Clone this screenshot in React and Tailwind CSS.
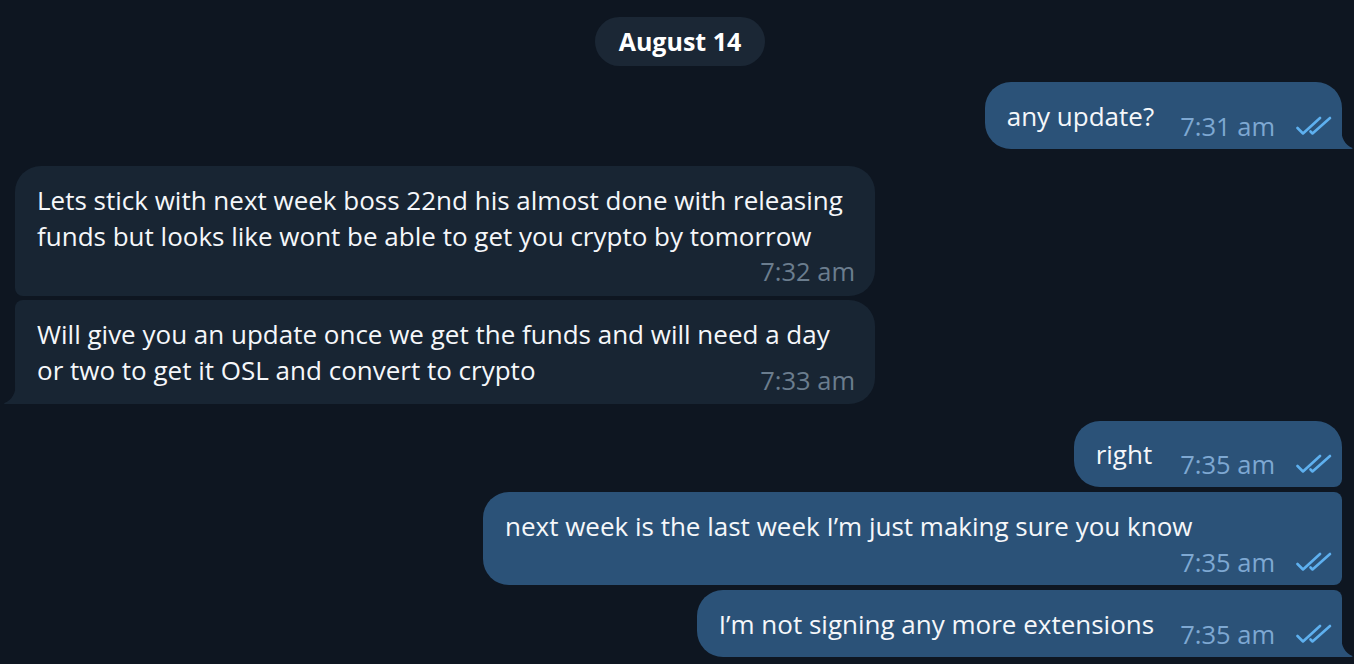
import React from "react";

function Checks() {
  return (
    <svg width="36" height="20" viewBox="0 0 36 20" fill="none" className="shrink-0">
      <path d="M1.5 12 L7 17.5 L24 2" stroke="#5eb0ef" strokeWidth="2.6" strokeLinecap="round" strokeLinejoin="round" />
      <path d="M14.5 15.5 L16.5 17.5 L34 2" stroke="#5eb0ef" strokeWidth="2.6" strokeLinecap="round" strokeLinejoin="round" />
    </svg>
  );
}

function OutTime({ t }) {
  return (
    <div className="flex items-center gap-[21px] shrink-0">
      <span className="text-[25.5px] leading-[26px] text-[#7ea8d2]">{t}</span>
      <Checks />
    </div>
  );
}

function InTime({ t }) {
  return <span className="text-[25.5px] leading-[26px] text-[#6b7d8e] shrink-0">{t}</span>;
}

function OutTail() {
  return (
    <svg width="12" height="22" viewBox="0 0 12 22" className="absolute bottom-0 right-[-11px]">
      <path d="M0 0 C0 11 4 18 11.5 21 Q12 22 10 22 L0 22 Z" fill="#2b5278" />
    </svg>
  );
}

function InTail() {
  return (
    <svg width="13" height="22" viewBox="0 0 13 22" className="absolute bottom-0 left-[-12px]">
      <path d="M13 0 C13 11 9 18 1.5 21 Q0 22 3 22 L13 22 Z" fill="#182533" />
    </svg>
  );
}

export default function App() {
  return (
    <div className="w-[1354px] h-[664px] overflow-hidden bg-[#0e1621] font-['Open_Sans',sans-serif] text-[#f5f7fa] pl-[15px] pr-[12px] pt-[17px]">
      <div className="flex justify-center pl-[3px]">
        <div className="h-[49px] px-[24px] rounded-full bg-[#1b2735] flex items-center text-[25px] font-bold text-white">
          August 14
        </div>
      </div>

      {/* outgoing 1 */}
      <div className="flex justify-end mt-[16px]">
        <div className="relative bg-[#2b5278] rounded-[26px] rounded-br-none pl-[22px] pr-[10px] pt-[16px] pb-[10px] flex items-end gap-[26px]">
          <span className="text-[26px] leading-[36px] mb-[5px]">any update?</span>
          <OutTime t="7:31 am" />
          <OutTail />
        </div>
      </div>

      {/* incoming 1 */}
      <div className="flex justify-start mt-[17px]">
        <div className="relative w-[860px] bg-[#182533] rounded-[26px] rounded-bl-[8px] pl-[22px] pr-[20px] pt-[16px] pb-[12px]">
          <div className="text-[26px] leading-[36px] whitespace-nowrap">
            Lets stick with next week boss 22nd his almost done with releasing
            <br />
            funds but looks like wont be able to get you crypto by tomorrow
          </div>
          <div className="flex justify-end mt-[4px]">
            <InTime t="7:32 am" />
          </div>
        </div>
      </div>

      {/* incoming 2 */}
      <div className="flex justify-start mt-[4px]">
        <div className="relative w-[860px] bg-[#182533] rounded-[26px] rounded-tl-[8px] rounded-bl-none pl-[22px] pr-[20px] pt-[16px] pb-[11px]">
          <div className="text-[26px] leading-[36px] whitespace-nowrap">
            Will give you an update once we get the funds and will need a day
          </div>
          <div className="flex items-end justify-between">
            <span className="text-[26px] leading-[36px] mb-[5px] whitespace-nowrap">or two to get it OSL and convert to crypto</span>
            <InTime t="7:33 am" />
          </div>
          <InTail />
        </div>
      </div>

      {/* outgoing right */}
      <div className="flex justify-end mt-[17px]">
        <div className="relative bg-[#2b5278] rounded-[26px] rounded-br-[8px] pl-[22px] pr-[10px] pt-[15px] pb-[10px] flex items-end gap-[28px]">
          <span className="text-[26px] leading-[36px] mb-[5px]">right</span>
          <OutTime t="7:35 am" />
        </div>
      </div>

      {/* outgoing next week */}
      <div className="flex justify-end mt-[5px]">
        <div className="relative w-[859px] bg-[#2b5278] rounded-[26px] rounded-tr-[8px] rounded-br-[8px] pl-[22px] pr-[10px] pt-[16px] pb-[10px]">
          <div className="text-[26px] leading-[36px] whitespace-nowrap">
            next week is the last week I’m just making sure you know
          </div>
          <div className="flex justify-end mt-[5px]">
            <OutTime t="7:35 am" />
          </div>
        </div>
      </div>

      {/* outgoing last */}
      <div className="flex justify-end mt-[5px]">
        <div className="relative bg-[#2b5278] rounded-[26px] rounded-tr-[8px] rounded-br-none pl-[22px] pr-[10px] pt-[16px] pb-[10px] flex items-end gap-[26px]">
          <span className="text-[26px] leading-[36px] mb-[5px]">I’m not signing any more extensions</span>
          <OutTime t="7:35 am" />
          <OutTail />
        </div>
      </div>
    </div>
  );
}
